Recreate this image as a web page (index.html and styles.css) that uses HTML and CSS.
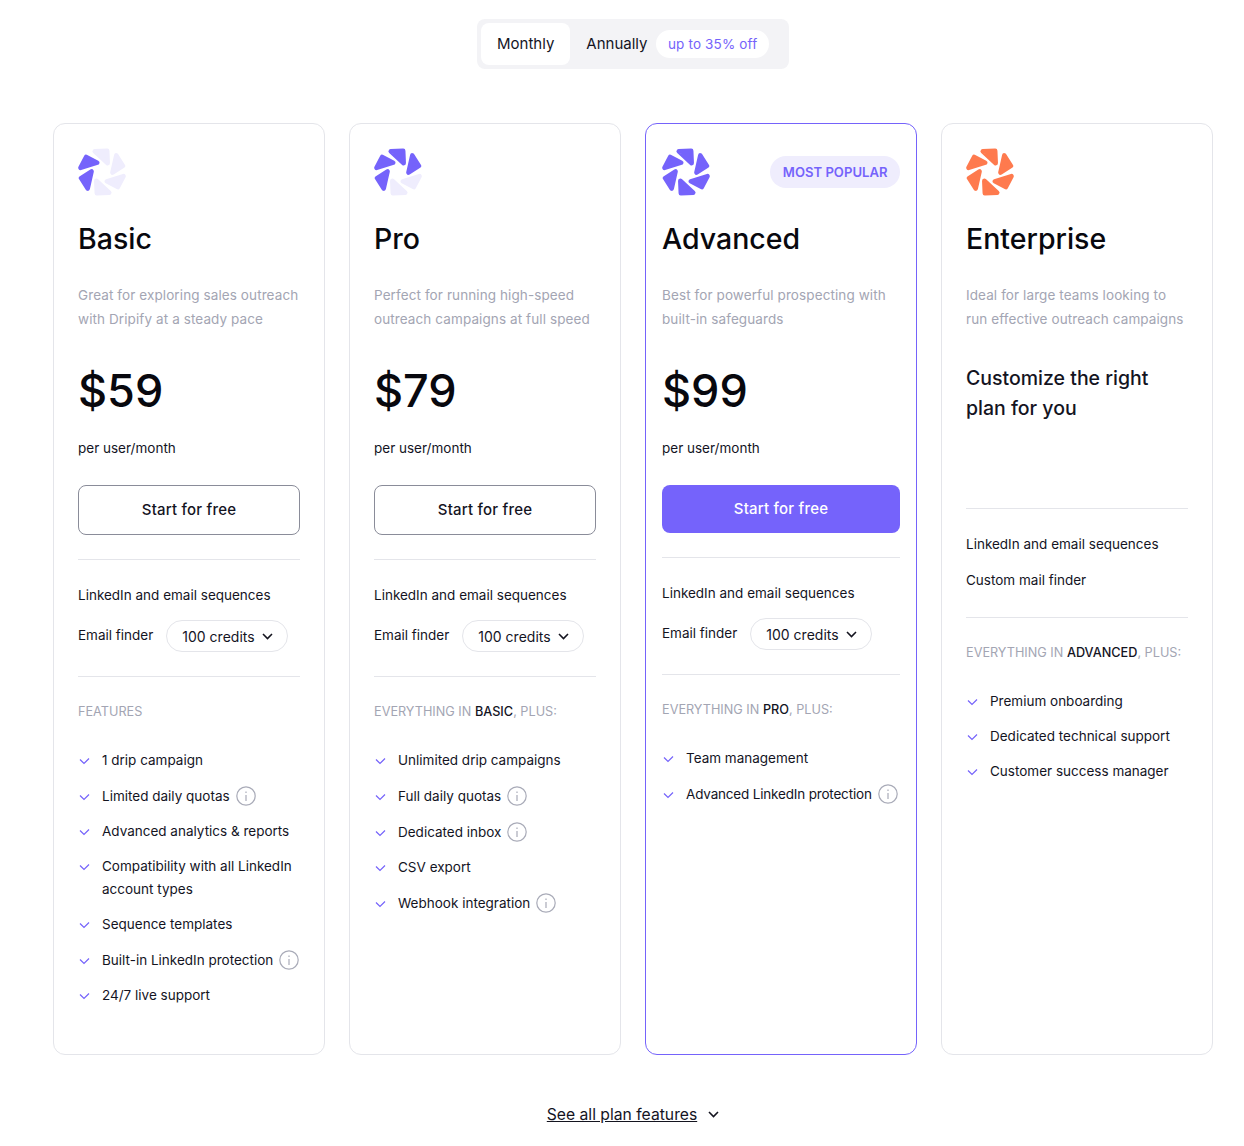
FILE: index.html
```html
<!DOCTYPE html>
<html lang="en">
<head>
    <meta charset="UTF-8">
    <meta name="viewport" content="width=device-width, initial-scale=1.0">
    <title>Pricing</title>
    <link rel="stylesheet" href="styles.css">
</head>
<body>
    <svg class="defs" width="0" height="0">
        <defs>
            <polygon id="petal" points="-7,-20 5,-20.5 5.5,-8.5" stroke-width="4.4" stroke-linejoin="round"/>
            <path id="check" d="M1 1.5 L5 5.5 L10 0.5" fill="none" stroke="#7563fb" stroke-width="1.2"/>
            <g id="info" fill="none" stroke="#a9abb8" stroke-width="1.2">
                <circle cx="10" cy="10" r="9.2"/>
                <path d="M10 9 V15 M10 5.5 V7"/>
            </g>
            <path id="chev" d="M1 1 L5.5 5.5 L10 1" fill="none" stroke="currentColor" stroke-width="1.6"/>
        </defs>
    </svg>

    <div class="toggle">
        <div class="tab tab-on">Monthly</div>
        <div class="tab">Annually</div>
        <span class="off">up to 35% off</span>
    </div>

    <div class="plans">
        <div class="card">
            <div class="logo-row">
                <svg class="logo" viewBox="-23.2 -23.2 46.4 46.4">
                    <use href="#petal" class="lt" />
                    <use href="#petal" class="lt" transform="rotate(60)" />
                    <use href="#petal" class="lt" transform="rotate(120)" />
                    <use href="#petal" class="lt" transform="rotate(180)" />
                    <use href="#petal" class="pu" transform="rotate(240)" />
                    <use href="#petal" class="pu" transform="rotate(300)" />
                </svg>
            </div>
            <h2>Basic</h2>
            <p class="desc">Great for exploring sales outreach with Dripify at a steady pace</p>
            <div class="price">$59</div>
            <div class="per">per user/month</div>
            <a class="btn">Start for free</a>
            <hr>
            <div class="line">LinkedIn and email sequences</div>
            <div class="finder">Email finder <span class="pick">100 credits <svg class="chev" width="11" height="7"><use href="#chev"/></svg></span></div>
            <hr class="hr2">
            <div class="head">FEATURES</div>
            <ul class="feats">
                <li><svg class="check" width="11" height="7"><use href="#check"/></svg>1 drip campaign</li>
                <li><svg class="check" width="11" height="7"><use href="#check"/></svg>Limited daily quotas<svg class="info" width="20" height="20"><use href="#info"/></svg></li>
                <li><svg class="check" width="11" height="7"><use href="#check"/></svg>Advanced analytics &amp; reports</li>
                <li class="two"><svg class="check" width="11" height="7"><use href="#check"/></svg><span>Compatibility with all LinkedIn<br>account types</span></li>
                <li><svg class="check" width="11" height="7"><use href="#check"/></svg>Sequence templates</li>
                <li><svg class="check" width="11" height="7"><use href="#check"/></svg>Built-in LinkedIn protection<svg class="info" width="20" height="20"><use href="#info"/></svg></li>
                <li><svg class="check" width="11" height="7"><use href="#check"/></svg>24/7 live support</li>
            </ul>
        </div>

        <div class="card">
            <div class="logo-row">
                <svg class="logo" viewBox="-23.2 -23.2 46.4 46.4">
                    <use href="#petal" class="pu" />
                    <use href="#petal" class="pu" transform="rotate(60)" />
                    <use href="#petal" class="lt" transform="rotate(120)" />
                    <use href="#petal" class="lt" transform="rotate(180)" />
                    <use href="#petal" class="pu" transform="rotate(240)" />
                    <use href="#petal" class="pu" transform="rotate(300)" />
                </svg>
            </div>
            <h2>Pro</h2>
            <p class="desc">Perfect for running high-speed<br>outreach campaigns at full speed</p>
            <div class="price">$79</div>
            <div class="per">per user/month</div>
            <a class="btn">Start for free</a>
            <hr>
            <div class="line">LinkedIn and email sequences</div>
            <div class="finder">Email finder <span class="pick">100 credits <svg class="chev" width="11" height="7"><use href="#chev"/></svg></span></div>
            <hr class="hr2">
            <div class="head">EVERYTHING IN <b>BASIC</b>, PLUS:</div>
            <ul class="feats">
                <li><svg class="check" width="11" height="7"><use href="#check"/></svg>Unlimited drip campaigns</li>
                <li><svg class="check" width="11" height="7"><use href="#check"/></svg>Full daily quotas<svg class="info" width="20" height="20"><use href="#info"/></svg></li>
                <li><svg class="check" width="11" height="7"><use href="#check"/></svg>Dedicated inbox<svg class="info" width="20" height="20"><use href="#info"/></svg></li>
                <li><svg class="check" width="11" height="7"><use href="#check"/></svg>CSV export</li>
                <li><svg class="check" width="11" height="7"><use href="#check"/></svg>Webhook integration<svg class="info" width="20" height="20"><use href="#info"/></svg></li>
            </ul>
        </div>

        <div class="card card-top">
            <div class="logo-row">
                <svg class="logo" viewBox="-23.2 -23.2 46.4 46.4">
                    <use href="#petal" class="pu" />
                    <use href="#petal" class="pu" transform="rotate(60)" />
                    <use href="#petal" class="pu" transform="rotate(120)" />
                    <use href="#petal" class="pu" transform="rotate(180)" />
                    <use href="#petal" class="pu" transform="rotate(240)" />
                    <use href="#petal" class="pu" transform="rotate(300)" />
                </svg>
                <span class="popular">MOST POPULAR</span>
            </div>
            <h2>Advanced</h2>
            <p class="desc">Best for powerful prospecting with<br>built-in safeguards</p>
            <div class="price">$99</div>
            <div class="per">per user/month</div>
            <a class="btn btn-fill">Start for free</a>
            <hr>
            <div class="line">LinkedIn and email sequences</div>
            <div class="finder">Email finder <span class="pick">100 credits <svg class="chev" width="11" height="7"><use href="#chev"/></svg></span></div>
            <hr class="hr2">
            <div class="head">EVERYTHING IN <b>PRO</b>, PLUS:</div>
            <ul class="feats">
                <li><svg class="check" width="11" height="7"><use href="#check"/></svg>Team management</li>
                <li class="tight"><svg class="check" width="11" height="7"><use href="#check"/></svg>Advanced LinkedIn protection<svg class="info" width="20" height="20"><use href="#info"/></svg></li>
            </ul>
        </div>

        <div class="card">
            <div class="logo-row">
                <svg class="logo" viewBox="-23.2 -23.2 46.4 46.4">
                    <use href="#petal" class="or" />
                    <use href="#petal" class="or" transform="rotate(60)" />
                    <use href="#petal" class="or" transform="rotate(120)" />
                    <use href="#petal" class="or" transform="rotate(180)" />
                    <use href="#petal" class="or" transform="rotate(240)" />
                    <use href="#petal" class="or" transform="rotate(300)" />
                </svg>
            </div>
            <h2>Enterprise</h2>
            <p class="desc">Ideal for large teams looking to<br>run effective outreach campaigns</p>
            <div class="custom">Customize the right<br>plan for you</div>
            <hr class="hr3">
            <div class="line">LinkedIn and email sequences</div>
            <div class="line line2">Custom mail finder</div>
            <hr class="hr4">
            <div class="head">EVERYTHING IN <b>ADVANCED</b>, PLUS:</div>
            <ul class="feats">
                <li><svg class="check" width="11" height="7"><use href="#check"/></svg>Premium onboarding</li>
                <li><svg class="check" width="11" height="7"><use href="#check"/></svg>Dedicated technical support</li>
                <li><svg class="check" width="11" height="7"><use href="#check"/></svg>Customer success manager</li>
            </ul>
        </div>
    </div>

    <div class="more">
        <a>See all plan features</a>
        <svg class="chev-more" width="11" height="7"><use href="#chev"/></svg>
    </div>
</body>
</html>
```

FILE: styles.css
```css
body {
    font-family: Inter, "Liberation Sans", sans-serif;
    background-color: #fff;
    color: #14141f;
    margin: 0;
    padding: 19px 31px 0 53px;
    font-size: 13.5px;
}
.defs {
    position: absolute;
}
.toggle {
    display: flex;
    align-items: center;
    width: 304px;
    height: 42px;
    margin: 0 auto;
    padding: 4px;
    background-color: #f3f3f6;
    border-radius: 8px;
    font-size: 15px;
    white-space: nowrap;
}
.tab {
    padding: 0 16px;
    height: 42px;
    line-height: 42px;
    border-radius: 8px;
}
.tab-on {
    background-color: #fff;
}
.off {
    background-color: #fff;
    color: #7563fb;
    font-size: 13.5px;
    letter-spacing: 0.15px;
    padding: 0 11.5px;
    height: 28px;
    line-height: 28px;
    border-radius: 14px;
    margin-left: -7px;
}
.plans {
    display: grid;
    grid-template-columns: repeat(4, 272px);
    gap: 24px;
    margin-top: 54px;
}
.card {
    height: 932px;
    box-sizing: border-box;
    border: 1px solid #e4e5ea;
    border-radius: 12px;
    padding: 24px 24px 0;
}
.card-top {
    border-color: #7563fb;
    padding-right: 16px;
    padding-left: 16px;
}
.logo-row {
    display: flex;
    align-items: center;
    justify-content: space-between;
    height: 48px;
}
.logo {
    width: 48px;
    height: 48px;
}
.lt { fill: #efedfd; stroke: #efedfd; }
.pu { fill: #7563fb; stroke: #7563fb; }
.or { fill: #fe7a4e; stroke: #fe7a4e; }
.popular {
    background-color: #efedfd;
    color: #7563fb;
    font-size: 13.1px;
    font-weight: 600;
    padding: 0 12.5px;
    height: 32px;
    line-height: 32px;
    border-radius: 16px;
}
h2 {
    color: #08080e;
    font-size: 28.5px;
    font-weight: 500;
    line-height: 40px;
    margin: 23px 0 0;
}
.desc {
    color: #a3a5b3;
    letter-spacing: 0.1px;
    line-height: 24px;
    margin: 24px 0 0;
    height: 48px;
}
.price {
    color: #08080e;
    font-size: 45px;
    font-weight: 500;
    line-height: 60px;
    margin-top: 30px;
}
.per {
    line-height: 20px;
    margin-top: 17px;
}
.btn {
    display: block;
    box-sizing: border-box;
    height: 50px;
    line-height: 48px;
    border: 1px solid #8a8c99;
    border-radius: 8px;
    text-align: center;
    font-size: 15px;
    font-weight: 500;
    letter-spacing: 0.2px;
    margin-top: 27px;
}
.btn-fill {
    height: 48px;
    background-color: #7563fb;
    border: none;
    color: #fff;
}
hr {
    border: none;
    border-top: 1px solid #e4e5ea;
    margin: 24px 0 0;
}
.line {
    line-height: 20px;
    margin-top: 25px;
}
.finder {
    display: flex;
    align-items: center;
    gap: 13px;
    margin-top: 13px;
}
.pick {
    display: flex;
    align-items: center;
    gap: 7px;
    height: 30px;
    margin-top: 2px;
    padding: 0 14px 0 15px;
    border: 1px solid #e4e5ea;
    border-radius: 16px;
    font-size: 14px;
}
.hr2 {
    margin-top: 24px;
}
.head {
    color: #a3a5b3;
    font-size: 12.7px;
    line-height: 20px;
    margin-top: 25px;
    white-space: nowrap;
}
.head b {
    color: #14141f;
    font-weight: 500;
}
.feats {
    list-style: none;
    margin: 27px 0 0;
    padding: 0;
}
.feats li {
    display: flex;
    align-items: center;
    line-height: 23px;
    min-height: 23px;
    margin-bottom: 12px;
    white-space: nowrap;
}
.tight {
    letter-spacing: -0.18px;
}
.check {
    flex: none;
    width: 11px;
    margin: 2px 12px 0 1px;
}
.two {
    align-items: flex-start !important;
}
.two .check {
    margin-top: 9px;
}
.info {
    flex: none;
    margin: 2px 0 2px 6px;
}
.custom {
    font-size: 19.5px;
    font-weight: 500;
    line-height: 30px;
    margin-top: 32px;
    height: 60px;
}
.hr3 {
    margin-top: 85px;
}
.line2 {
    margin-top: 16px;
}
.hr4 {
    margin-top: 27px;
}
.more {
    display: flex;
    align-items: center;
    justify-content: center;
    gap: 11px;
    margin-top: 50px;
    font-size: 15.7px;
}
.more a {
    text-decoration: underline;
}
```
